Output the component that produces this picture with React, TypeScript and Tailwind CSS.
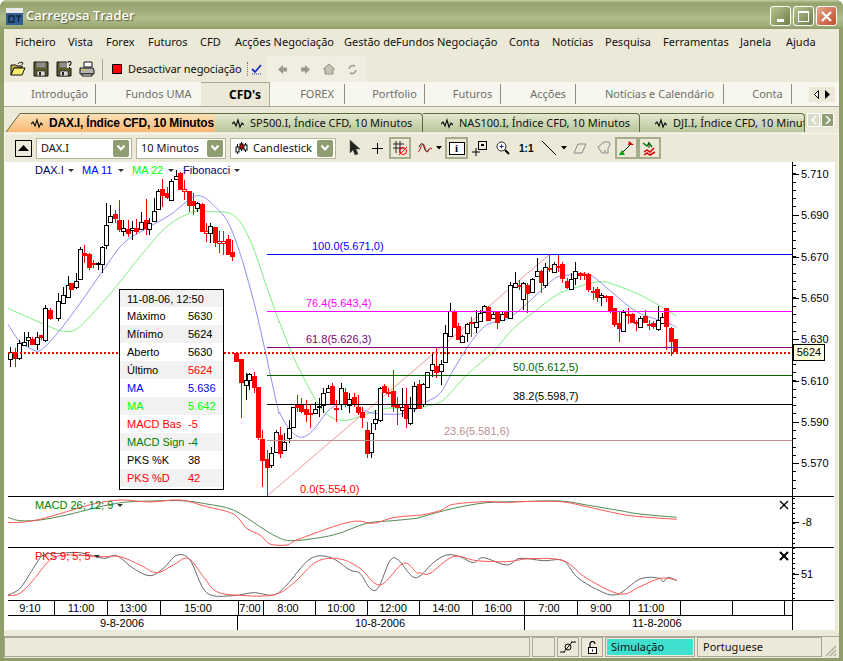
import React from 'react';

type Candle = [number, number, number, number, number, 'w' | 'r' | 'h'];

// candle coords are read off three crops, toPage maps them back to page pixels
const leftCandles: Candle[] = [
  [30, 575, 598, 562, 620, 'w'], [45, 575, 595, 565, 620, 'r'], [58, 550, 593, 540, 600, 'w'],
  [72, 545, 556, 517, 556, 'w'], [85, 532, 540, 517, 560, 'w'], [97, 538, 552, 530, 555, 'r'],
  [110, 532, 552, 517, 570, 'w'], [124, 526, 530, 526, 540, 'r'], [136, 445, 540, 436, 545, 'w'],
  [150, 450, 473, 445, 480, 'r'], [175, 424, 475, 400, 482, 'w'], [190, 406, 430, 380, 430, 'w'],
  [203, 376, 412, 348, 412, 'w'], [213, 370, 388, 368, 390, 'r'], [229, 364, 382, 340, 386, 'w'],
  [241, 268, 358, 262, 360, 'w'], [253, 280, 285, 255, 310, 'r'], [267, 283, 322, 280, 330, 'r'],
  [280, 309, 312, 300, 325, 'r'], [293, 309, 313, 305, 330, 'w'], [307, 262, 312, 258, 340, 'w'],
  [319, 196, 256, 130, 268, 'w'], [331, 169, 186, 135, 190, 'w'], [345, 163, 173, 150, 190, 'r'],
  [358, 181, 206, 120, 215, 'r'], [370, 203, 214, 180, 228, 'w'], [384, 208, 218, 180, 232, 'r'],
  [397, 204, 210, 182, 240, 'w'], [408, 203, 212, 178, 222, 'r'], [424, 186, 208, 155, 210, 'w'],
  [437, 180, 205, 116, 225, 'r'], [448, 188, 208, 175, 225, 'w'], [463, 152, 182, 115, 182, 'w'],
  [474, 94, 146, 88, 150, 'w'], [486, 88, 106, 58, 140, 'r'], [500, 98, 112, 80, 118, 'r'],
  [514, 64, 121, 58, 122, 'w'], [528, 47, 57, 30, 60, 'w'], [540, 40, 86, 35, 90, 'r'],
  [553, 88, 93, 60, 120, 'h'], [567, 94, 136, 92, 155, 'r'], [580, 122, 136, 100, 165, 'r'],
  [592, 128, 145, 125, 155, 'w'], [606, 132, 212, 130, 215, 'r'], [618, 212, 218, 190, 245, 'h'],
  [631, 197, 220, 188, 250, 'w'], [645, 202, 245, 200, 260, 'r'], [657, 243, 250, 212, 280, 'h'],
  [670, 243, 250, 212, 285, 'h'], [684, 238, 281, 225, 285, 'r'], [697, 277, 288, 240, 302, 'r'],
  [708, 578, 602, 575, 604, 'r'], [723, 598, 665, 598, 775, 'r'], [737, 660, 675, 640, 720, 'w'],
  [748, 643, 660, 640, 690, 'w'], [762, 648, 682, 635, 700, 'r'], [773, 680, 832, 680, 840, 'r'],
  [787, 838, 900, 810, 980, 'r'], [801, 897, 920, 870, 1005, 'r'], [814, 880, 916, 860, 925, 'w'],
  [827, 817, 875, 810, 880, 'w'],
];

const midCandles: Candle[] = [
  [0, 615, 670, 590, 683, 'r'], [13, 636, 660, 610, 660, 'w'], [26, 595, 625, 570, 640, 'w'],
  [39, 532, 590, 530, 590, 'w'], [50, 524, 530, 495, 545, 'r'], [62, 524, 542, 505, 550, 'r'],
  [77, 537, 552, 510, 575, 'r'], [90, 550, 553, 525, 595, 'r'], [106, 538, 550, 515, 550, 'w'],
  [118, 527, 530, 505, 560, 'w'], [130, 490, 525, 475, 550, 'w'], [143, 475, 485, 465, 480, 'w'],
  [156, 468, 522, 458, 525, 'r'], [168, 533, 535, 510, 575, 'r'], [184, 475, 522, 458, 540, 'w'],
  [195, 485, 522, 475, 530, 'r'], [208, 508, 525, 490, 550, 'w'], [222, 502, 518, 490, 530, 'r'],
  [233, 530, 546, 495, 555, 'r'], [245, 545, 560, 530, 595, 'r'], [261, 600, 668, 575, 683, 'r'],
  [274, 610, 665, 580, 683, 'w'], [286, 566, 578, 540, 600, 'w'], [300, 475, 570, 470, 575, 'w'],
  [312, 467, 487, 462, 490, 'r'], [325, 486, 488, 475, 500, 'r'], [338, 483, 528, 420, 545, 'r'],
  [352, 526, 532, 500, 585, 'r'], [365, 530, 540, 475, 560, 'w'], [378, 525, 563, 475, 595, 'r'],
  [391, 535, 578, 500, 585, 'w'], [403, 468, 535, 455, 545, 'w'], [417, 462, 535, 450, 535, 'r'],
  [430, 462, 522, 460, 530, 'w'], [442, 427, 470, 425, 475, 'w'], [457, 403, 420, 365, 440, 'w'],
  [469, 408, 425, 355, 445, 'r'], [484, 403, 422, 390, 465, 'w'], [496, 308, 395, 285, 400, 'w'],
  [509, 242, 317, 218, 320, 'w'], [521, 245, 292, 240, 295, 'r'], [534, 288, 327, 280, 330, 'r'],
  [547, 317, 335, 315, 340, 'w'], [562, 283, 308, 280, 335, 'w'], [574, 277, 279, 260, 320, 'r'],
  [587, 277, 290, 240, 310, 'w'], [601, 250, 272, 240, 275, 'w'], [613, 227, 245, 225, 248, 'w'],
  [625, 232, 270, 228, 270, 'r'], [640, 253, 265, 245, 268, 'w'], [652, 243, 275, 243, 297, 'r'],
  [665, 253, 270, 245, 272, 'w'], [678, 245, 260, 243, 265, 'r'], [690, 165, 265, 155, 265, 'w'],
  [704, 160, 172, 125, 175, 'w'], [717, 165, 168, 150, 180, 'r'], [730, 160, 208, 155, 240, 'w'],
  [742, 165, 188, 160, 250, 'r'], [757, 148, 185, 145, 190, 'w'], [770, 122, 138, 85, 140, 'w'],
  [783, 122, 155, 120, 190, 'r'], [796, 110, 165, 100, 175, 'w'], [808, 113, 116, 75, 125, 'r'],
  [821, 103, 127, 97, 128, 'w'], [834, 107, 112, 75, 125, 'r'],
];

const rightCandles: Candle[] = [
  [65, 103, 145, 97, 160, 'r'], [80, 153, 170, 145, 178, 'r'], [94, 148, 178, 130, 180, 'w'],
  [106, 122, 145, 97, 165, 'w'], [119, 130, 135, 125, 150, 'r'], [132, 133, 136, 125, 150, 'r'],
  [144, 133, 178, 128, 185, 'r'], [158, 182, 185, 170, 210, 'r'], [171, 178, 200, 172, 215, 'r'],
  [184, 196, 202, 190, 228, 'w'], [197, 197, 200, 195, 215, 'r'], [210, 198, 240, 198, 248, 'r'],
  [222, 235, 282, 235, 292, 'r'], [238, 278, 295, 245, 335, 'r'], [250, 247, 302, 240, 302, 'w'],
  [263, 252, 255, 235, 282, 'r'], [276, 253, 275, 250, 280, 'r'], [288, 275, 278, 270, 302, 'r'],
  [301, 265, 290, 258, 295, 'w'], [315, 258, 275, 240, 278, 'r'], [328, 282, 285, 270, 300, 'r'],
  [340, 278, 288, 272, 298, 'r'], [355, 270, 297, 228, 302, 'w'], [367, 260, 278, 250, 280, 'w'],
  [379, 235, 288, 235, 360, 'r'], [393, 295, 332, 290, 378, 'r'], [405, 328, 362, 328, 365, 'r'],
];

const toPage = (list: Candle[], ox: number, oy: number): Candle[] =>
  list.map(([x, a, b, c, d, k]) => [
    Math.round(ox + x / 3),
    Math.round(oy + a / 3),
    Math.round(oy + b / 3),
    Math.round(oy + c / 3),
    Math.round(oy + d / 3),
    k,
  ]);

const candles = [
  ...toPage(leftCandles, 0, 160),
  ...toPage(midCandles, 280, 230),
  ...toPage(rightCandles, 540, 230),
];

const pts = (list: number[][], ox: number, oy: number) => list.map(([x, y]) => [ox + x / 3, oy + y / 3]);

// catmull-rom through the sampled points so the indicator curves stay round
const smooth = (p: number[][]) => {
  let d = `M${p[0][0]} ${p[0][1]}`;
  for (let i = 0; i < p.length - 1; i++) {
    const a = p[Math.max(i - 1, 0)];
    const b = p[i];
    const c = p[i + 1];
    const e = p[Math.min(i + 2, p.length - 1)];
    d += `C${b[0] + (c[0] - a[0]) / 6} ${b[1] + (c[1] - a[1]) / 6} ${c[0] - (e[0] - b[0]) / 6} ${c[1] - (e[1] - b[1]) / 6} ${c[0]} ${c[1]}`;
  }
  return d;
};

const ma11 = smooth([
  ...pts([[24, 493], [60, 545], [105, 572], [130, 565], [180, 510], [240, 430], [310, 330], [370, 250], [440, 205], [510, 165], [560, 125], [597, 107], [640, 135], [695, 210], [760, 420], [830, 730]], 0, 160),
  ...pts([[0, 550], [30, 600], [65, 622], [100, 600], [130, 560], [160, 530], [210, 518], [270, 548], [380, 550], [430, 520], [480, 490], [520, 420], [570, 340], [620, 285], [690, 262], [780, 185]], 280, 230),
  ...pts([[50, 142], [100, 135], [150, 135], [220, 190], [290, 245], [380, 278], [410, 292]], 540, 230),
]);

const ma22 = smooth([
  ...pts([[24, 445], [80, 470], [130, 492], [180, 512], [220, 512], [260, 480], [340, 390], [420, 290], [500, 200], [580, 155], [630, 155], [700, 165], [750, 240], [800, 380], [835, 480]], 0, 160),
  ...pts([[0, 280], [40, 380], [80, 460], [120, 530], [160, 565], [205, 570], [260, 552], [320, 535], [400, 535], [440, 528], [490, 510], [560, 435], [640, 365], [700, 295], [770, 240]], 280, 230),
  ...pts([[50, 195], [100, 175], [180, 155], [240, 170], [320, 205], [410, 258]], 540, 230),
]);

const macdRed = smooth([
  ...pts([[24, 97], [60, 97], [120, 88], [200, 65], [280, 42], [360, 30], [450, 36], [540, 30], [620, 50], [700, 72], [740, 115], [780, 135], [810, 162], [860, 165], [890, 150], [1000, 110], [1070, 93], [1120, 100], [1180, 83], [1250, 76]], 0, 490),
  ...pts([[0, 76], [60, 62], [100, 43], [200, 35], [260, 38], [300, 35], [420, 35], [500, 50], [600, 72], [660, 80], [770, 88]], 420, 490),
]);
const macdGreen = smooth([
  ...pts([[24, 82], [60, 92], [120, 90], [200, 75], [280, 55], [340, 42], [400, 35], [540, 32], [620, 42], [700, 60], [780, 110], [830, 140], [880, 152], [1000, 135], [1100, 100], [1180, 92], [1250, 85]], 0, 490),
  ...pts([[0, 82], [100, 55], [200, 38], [300, 35], [420, 33], [500, 45], [600, 62], [660, 72], [770, 82]], 420, 490),
]);
const pksBlack = smooth([
  ...pts([[24, 315], [60, 295], [100, 235], [130, 195], [180, 190], [240, 188], [310, 205], [350, 197], [400, 235], [450, 257], [490, 235], [530, 196], [570, 210], [620, 308], [700, 317], [760, 308], [820, 315], [860, 285], [930, 207], [990, 202], [1050, 240], [1080, 250], [1110, 295], [1135, 293], [1170, 212], [1195, 210], [1235, 258]], 0, 490),
  ...pts([[0, 258], [40, 218], [80, 195], [120, 200], [160, 218], [190, 203], [260, 225], [300, 205], [370, 212], [430, 212], [470, 260], [530, 298], [590, 314], [660, 267], [715, 264], [730, 275], [745, 262], [770, 272]], 420, 490),
]);
const pksRed = smooth([
  ...pts([[24, 317], [60, 310], [100, 270], [150, 210], [200, 195], [300, 200], [360, 200], [420, 225], [470, 248], [520, 225], [565, 205], [610, 260], [650, 305], [720, 316], [820, 315], [880, 280], [950, 215], [1020, 207], [1080, 235], [1140, 285], [1210, 220], [1250, 248]], 0, 490),
  ...pts([[0, 248], [30, 250], [100, 200], [170, 212], [260, 215], [330, 206], [430, 212], [500, 265], [600, 312], [660, 290], [720, 265], [770, 270]], 420, 490),
]);

const fibLines = [
  { y: 254.5, color: '#0000ff', label: '100.0(5.671,0)', x: 312, ly: 250 },
  { y: 311.5, color: '#ff00ff', label: '76.4(5.643,4)', x: 306, ly: 307 },
  { y: 347.5, color: '#800080', label: '61.8(5.626,3)', x: 306, ly: 343 },
  { y: 375.5, color: '#006400', label: '50.0(5.612,5)', x: 513, ly: 371 },
  { y: 404.5, color: '#000000', label: '38.2(5.598,7)', x: 513, ly: 400 },
  { y: 440.5, color: '#bc8f8f', label: '23.6(5.581,6)', x: 444, ly: 435 },
];

const priceLabels = [
  ['5.710', 178], ['5.690', 219], ['5.670', 261], ['5.650', 302],
  ['5.630', 343], ['5.610', 385], ['5.590', 426], ['5.570', 467],
] as const;

const topTicks = [54, 107, 160, 238, 263, 315, 367, 419, 472, 524, 577, 629, 680, 732, 784];
const timeLabels = [
  ['9:10', 30], ['11:00', 81], ['13:00', 133], ['15:00', 198], ['7:00', 250], ['8:00', 288],
  ['10:00', 341], ['12:00', 393], ['14:00', 446], ['16:00', 498], ['7:00', 549], ['9:00', 601], ['11:00', 651],
] as const;

const axisTicks = (from: number, to: number, step: number) => {
  const out: number[] = [];
  for (let y = from; y < to; y += step) out.push(Math.round(y) + 0.5);
  return out;
};

const ChartSvg = () => (
  <svg width="830" height="468" viewBox="5 162 830 468" className="block" fontFamily="'Liberation Sans', Arial, sans-serif" fontSize="11">
    {/* ma lines sit under the candles */}
    <path d={ma22} fill="none" stroke="#7dee7d" strokeWidth="1" />
    <path d={ma11} fill="none" stroke="#8f8ff2" strokeWidth="1" />
    <line x1="267" y1="496" x2="550" y2="254" stroke="#f59a9a" strokeWidth="1" />

    {candles.map(([x, a, b, c, d, k], i) => {
      const color = k === 'w' ? '#000000' : '#ff0000';
      return (
        <g key={i} shapeRendering="crispEdges">
          <line x1={x + 0.5} x2={x + 0.5} y1={c} y2={d} stroke={color} strokeWidth="1" />
          {k === 'r' ? (
            <rect x={x - 2} y={a} width="5" height={Math.max(b - a, 1) + 1} fill="#ff0000" />
          ) : (
            <rect x={x - 1.5} y={a + 0.5} width="4" height={Math.max(b - a, 1)} fill="#ffffff" stroke={color} strokeWidth="1" />
          )}
        </g>
      );
    })}

    <g shapeRendering="crispEdges">
      {fibLines.map(f => (
        <line key={f.label} x1="267" x2="792" y1={f.y} y2={f.y} stroke={f.color} strokeWidth="1" />
      ))}
      <line x1="8" x2="792" y1="352.5" y2="352.5" stroke="#ff0000" strokeWidth="2" strokeDasharray="2 2" />
      <line x1="267.5" x2="267.5" y1="486" y2="496" stroke="#ff0000" strokeWidth="1" />
      <line x1="8" x2="834" y1="496.5" y2="496.5" stroke="#000" strokeWidth="1" />
      <line x1="8" x2="834" y1="547.5" y2="547.5" stroke="#000" strokeWidth="1" />
      <line x1="8" x2="834" y1="600.5" y2="600.5" stroke="#000" strokeWidth="1" />
      <line x1="8" x2="792" y1="615.5" y2="615.5" stroke="#000" strokeWidth="1" />
      <line x1="792.5" x2="792.5" y1="162" y2="630" stroke="#000" strokeWidth="1" />
      {axisTicks(165, 496, 8.28).map(y => (
        <line key={y} x1="793" x2="796" y1={y} y2={y} stroke="#000" strokeWidth="1" />
      ))}
      {[174, 215, 257, 298, 339, 381, 422, 463].map(y => (
        <line key={y} x1="793" x2="799" y1={y + 0.5} y2={y + 0.5} stroke="#000" strokeWidth="1" />
      ))}
      {axisTicks(498, 600, 5).map(y => (
        <line key={y} x1="793" x2="795" y1={y} y2={y} stroke="#000" strokeWidth="1" />
      ))}
      <line x1="793" x2="799" y1="522.5" y2="522.5" stroke="#000" strokeWidth="1" />
      <line x1="793" x2="799" y1="574.5" y2="574.5" stroke="#000" strokeWidth="1" />
      {topTicks.map(x => (
        <line key={x} x1={x + 0.5} x2={x + 0.5} y1="600" y2="615" stroke="#000" strokeWidth="1" />
      ))}
      <line x1="237.5" x2="237.5" y1="615" y2="630" stroke="#000" strokeWidth="1" />
      <line x1="524.5" x2="524.5" y1="615" y2="630" stroke="#000" strokeWidth="1" />
    </g>

    {fibLines.map(f => (
      <text key={f.label} x={f.x} y={f.ly} fill={f.color}>{f.label}</text>
    ))}
    <text x="300" y="493" fill="#ff0000">0.0(5.554,0)</text>

    <text x="35" y="174" fill="#000060">DAX.I</text>
    <path d="M68 169h6l-3 3z" fill="#333" />
    <text x="82" y="174" fill="#0000ff">MA 11</text>
    <path d="M118 169h6l-3 3z" fill="#333" />
    <text x="132" y="174" fill="#00ff00">MA 22</text>
    <path d="M168 169h6l-3 3z" fill="#333" />
    <text x="183" y="174" fill="#000060">Fibonacci</text>
    <path d="M234 169h6l-3 3z" fill="#333" />

    {priceLabels.map(([t, y]) => (
      <text key={t} x="801" y={y} fill="#000">{t}</text>
    ))}
    <text x="802" y="526" fill="#000">-8</text>
    <text x="801" y="578" fill="#000">51</text>

    <path d={macdGreen} fill="none" stroke="#4f8a4f" strokeWidth="1" />
    <path d={macdRed} fill="none" stroke="#f55" strokeWidth="1" />
    <path d={pksBlack} fill="none" stroke="#666" strokeWidth="1" />
    <path d={pksRed} fill="none" stroke="#f55" strokeWidth="1" />
    <text x="35" y="509" fill="#008000">MACD 26; 12; 9</text>
    <path d="M117 504h6l-3 3z" fill="#333" />
    <text x="35" y="560" fill="#ff0000">PKS 9; 5; 5</text>
    <path d="M94 555h6l-3 3z" fill="#333" />
    <path d="M780 501l8 8M788 501l-8 8" stroke="#000" strokeWidth="1.4" />
    <path d="M780 552l8 8M788 552l-8 8" stroke="#000" strokeWidth="2" />

    {timeLabels.map(([t, x], i) => (
      <text key={i} x={x} y="612" textAnchor="middle" fill="#000">{t}</text>
    ))}
    <text x="122" y="627" textAnchor="middle" fill="#000">9-8-2006</text>
    <text x="380" y="627" textAnchor="middle" fill="#000">10-8-2006</text>
    <text x="657" y="627" textAnchor="middle" fill="#000">11-8-2006</text>
  </svg>
);

const rows = [
  ['Máximo', '5630', 'text-[#000]', 'text-[#000]'],
  ['Mínimo', '5624', 'text-[#000]', 'text-[#000]'],
  ['Aberto', '5630', 'text-[#000]', 'text-[#000]'],
  ['Último', '5624', 'text-[#000]', 'text-[#ff0000]'],
  ['MA', '5.636', 'text-[#0000ff]', 'text-[#0000ff]'],
  ['MA', '5.642', 'text-[#00ff00]', 'text-[#00ff00]'],
  ['MACD Bas', '-5', 'text-[#ff0000]', 'text-[#ff0000]'],
  ['MACD Sign', '-4', 'text-[#008000]', 'text-[#008000]'],
  ['PKS %K', '38', 'text-[#000]', 'text-[#000]'],
  ['PKS %D', '42', 'text-[#ff0000]', 'text-[#ff0000]'],
];

const InfoBox = () => (
  <div className="absolute left-[114px] top-[127px] w-[105px] h-[201px] border border-black bg-white font-['Liberation_Sans',Arial,sans-serif] text-[11px] leading-[18px]">
    <div className="h-[17px] bg-[#f2f2f2] pl-[7px] text-[#000]">11-08-06, 12:50</div>
    {rows.map((r, i) => (
      <div key={i} className={`flex h-[18px] pl-[7px] ${i % 2 === 1 ? 'bg-[#f2f2f2]' : 'bg-white'}`}>
        <span className={`w-[61px] shrink-0 ${r[2]}`}>{r[0]}</span>
        <span className={r[3]}>{r[1]}</span>
      </div>
    ))}
  </div>
);

const menu: [string, number][] = [
  ['Ficheiro', 53], ['Vista', 38], ['Forex', 42], ['Futuros', 52], ['CFD', 35], ['Acções Negociação', 109],
  ['Gestão deFundos Negociação', 165], ['Conta', 43], ['Notícias', 53], ['Pesquisa', 58], ['Ferramentas', 77], ['Janela', 46], ['Ajuda', 40],
];

const mainTabs: [string, number, boolean][] = [
  ['Introdução', 92, true], ['Fundos UMA', 105, false], ["CFD's", 69, false], ['FOREX', 75, true],
  ['Portfolio', 80, true], ['Futuros', 76, true], ['Acções', 75, true], ['Notícias e Calendário', 148, true], ['Conta', 68, true],
];

const WaveIcon = () => (
  <svg width="12" height="12" viewBox="0 0 12 12" className="shrink-0">
    <path d="M0 7l2-2 2 4 2-6 2 7 2-4 2 2" fill="none" stroke="#111" strokeWidth="1.2" />
  </svg>
);

const DocTab = ({ label, width, pad }: { label: string; width: number; pad: number }) => (
  <div
    className="flex h-[19px] items-center gap-[6px] overflow-hidden rounded-tr-[4px] border-r border-t border-[#5d6b3e] bg-[linear-gradient(to_bottom,#e3e8cf,#b9c79b)] text-[11px] text-[#111]"
    style={{ width, paddingLeft: pad }}
  >
    <WaveIcon />
    <span className="whitespace-nowrap">{label}</span>
  </div>
);

const Combo = ({ width, label, icon }: { width: number; label: string; icon?: boolean }) => (
  <div className="flex h-[21px] items-center border border-[#b5b99a] bg-white pl-[4px] pr-[2px]" style={{ width }}>
    {icon && (
      <svg width="13" height="13" viewBox="0 0 13 13" className="mr-[5px] shrink-0">
        <path d="M2.5 2v10M6.5 0v9M10.5 1v9" stroke="#000" />
        <rect x="1" y="5" width="3" height="5" fill="#fff" stroke="#000" />
        <rect x="5" y="2" width="3" height="5" fill="#ff0000" stroke="#000" />
        <rect x="9" y="3" width="3" height="5" fill="#fff" stroke="#000" />
      </svg>
    )}
    <span className="flex-1 whitespace-nowrap text-[11px] text-[#111]">{label}</span>
    <div className="flex h-[17px] w-[16px] items-center justify-center rounded-[2px] bg-[#8f9e70]">
      <svg width="10" height="8" viewBox="0 0 10 8">
        <path d="M1.5 1.5L5 5.5l3.5-4" fill="none" stroke="#fff" strokeWidth="2" />
      </svg>
    </div>
  </div>
);

const Floppy = ({ help }: { help?: boolean }) => (
  <svg width="16" height="16" viewBox="0 0 16 16">
    <path d="M1 1h14v14H1z" fill="#5c5c2e" stroke="#111" />
    <rect x="3.5" y="1.5" width="9" height="5" fill="#8c8c8c" />
    <rect x="4" y="10" width="8" height="5" fill="#ddd" stroke="#111" strokeWidth="0.6" />
    <rect x="6" y="11" width="2" height="3.5" fill="#222" />
    {help && <rect x="11" y="0" width="5" height="7" fill="#ece9d8" />}
    {help && <path d="M12 2c0-2 3-2 3 0s-1.500 1.500-1.500 3M13.500 6v1.500" fill="none" stroke="#111" strokeWidth="1.2" />}
  </svg>
);

const ToolToggle = ({ children, w = 22 }: { children: React.ReactNode; w?: number }) => (
  <div className="flex h-[22px] items-center justify-center border-2 border-[#a5ad8a] bg-[#ece9d8]" style={{ width: w }}>
    {children}
  </div>
);

const Caret = () => (
  <svg width="6" height="4" viewBox="0 0 6 4" className="shrink-0">
    <path d="M0 0h6L3 3.500z" fill="#000" />
  </svg>
);

const StatusCell = ({ w, children, cls = '' }: { w: number; children?: React.ReactNode; cls?: string }) => (
  <div className={`flex h-[20px] items-center border border-[#aca899] ${cls}`} style={{ width: w }}>
    {children}
  </div>
);

export default function App() {
  return (
    <div className="flex h-[661px] w-[843px] flex-col overflow-hidden rounded-t-[7px] bg-[#8f9e6b] font-['Noto_Sans',Tahoma,sans-serif]">
      {/* title bar */}
      <div className="flex h-[29px] shrink-0 items-center bg-[linear-gradient(to_bottom,#c4cfa4_0px,#94a26c_3px,#a3b07e_12px,#b2bd8d_18px,#9dab76_26px,#8d9b66_29px)] pl-[6px] pr-[6px] pt-[3px]">
        <svg width="17" height="17" viewBox="0 0 17 17" className="mr-[3px] shrink-0">
          <rect width="17" height="5" fill="#e8e8e8" />
          <rect y="5" width="17" height="12" fill="#2f5f93" />
          <path d="M3 8h5v6H3zM10 8h5M12.500 8v6" fill="none" stroke="#10243c" strokeWidth="1.400" />
        </svg>
        <span className="font-['Open_Sans',sans-serif] text-[13px] font-semibold text-white [text-shadow:1px_1px_1px_#55603c]">Carregosa Trader</span>
        <div className="ml-auto flex gap-[2px]">
          <div className="flex h-[20px] w-[21px] items-end justify-center rounded-[3px] border border-white bg-[linear-gradient(135deg,#b9c490,#6e7e4a)] pb-[3px]">
            <div className="h-[3px] w-[7px] bg-white" />
          </div>
          <div className="flex h-[20px] w-[21px] items-center justify-center rounded-[3px] border border-white bg-[linear-gradient(135deg,#b9c490,#6e7e4a)]">
            <div className="h-[11px] w-[11px] border border-t-2 border-white" />
          </div>
          <div className="flex h-[20px] w-[21px] items-center justify-center rounded-[3px] border border-white bg-[linear-gradient(135deg,#e9a58a,#c0492a)]">
            <svg width="13" height="13" viewBox="0 0 13 13">
              <path d="M2 2l9 9M11 2l-9 9" stroke="#fff" strokeWidth="2.200" />
            </svg>
          </div>
        </div>
      </div>

      <div className="mx-[4px] flex min-h-0 flex-1 flex-col bg-[#ece9d8]">
        {/* menu */}
        <div className="flex h-[27px] shrink-0 items-center pl-[11px] text-[11px] text-[#111]">
          {menu.map(([m, w]) => (
            <span key={m} className="whitespace-nowrap" style={{ width: w }}>{m}</span>
          ))}
        </div>

        {/* main toolbar */}
        <div className="flex h-[26px] shrink-0 items-center pl-[6px] text-[11px] text-[#111]">
          <div className="flex items-center gap-[7px]">
            <svg width="16" height="16" viewBox="0 0 16 16">
              <path d="M1 4h5l1 1h5v2H4L1 14z" fill="#c9b53a" stroke="#111" />
              <path d="M4 7h11l-3 7H1z" fill="#f7ee6b" stroke="#111" />
              <path d="M8 3c1-2 3-2 5-1m0 0l-2-1m2 1l-1 2" fill="none" stroke="#333" />
            </svg>
            <Floppy />
            <Floppy help />
            <svg width="16" height="16" viewBox="0 0 16 16">
              <path d="M5 1h8v5H5z" fill="#fff" stroke="#111" />
              <path d="M1 7h13l1 2v4H1z" fill="#b5b5b5" stroke="#111" />
              <path d="M3 9h4" stroke="#d8c23a" strokeWidth="1.500" />
              <path d="M3 13h10v2H3z" fill="#fff" stroke="#111" />
            </svg>
          </div>
          <div className="ml-[7px] h-[21px] w-px bg-[#aca899]" />
          <div className="ml-[9px] h-[10px] w-[10px] border border-black bg-[#ff0000]" />
          <span className="ml-[6px] whitespace-nowrap tracking-[-0.1px]">Desactivar negociação</span>
          <div className="ml-[5px] h-[14px] border-l border-dotted border-[#777]" />
          <svg width="12" height="12" viewBox="0 0 12 12" className="ml-[3px]">
            <path d="M1 6l3 3 6-7" fill="none" stroke="#1a2fc0" strokeWidth="1.800" />
            <path d="M1 11h10" stroke="#1a2fc0" strokeDasharray="1 1" />
          </svg>
          <div className="ml-[4px] flex h-[26px] w-[100px] items-center gap-[12px] bg-[#f0eee1] pl-[10px]">
            <svg width="11" height="11" viewBox="0 0 11 11"><path d="M6 1L1 5.500 6 10V7.500h4v-4H6z" fill="#9a9a8c" /></svg>
            <svg width="11" height="11" viewBox="0 0 11 11"><path d="M5 1l5 4.500L5 10V7.500H1v-4h4z" fill="#9a9a8c" /></svg>
            <svg width="12" height="12" viewBox="0 0 12 12"><path d="M6 1L0.500 6H2v5h8V6h1.500z" fill="#c4c2b2" stroke="#8e8e80" /></svg>
            <svg width="11" height="11" viewBox="0 0 11 11"><path d="M2 5a4 4 0 016-3M9 6a4 4 0 01-6 3" fill="none" stroke="#9a9a8c" strokeWidth="1.500" /></svg>
          </div>
        </div>

        {/* main tabs */}
        <div className="flex h-[25px] shrink-0 items-stretch border-b border-[#aca899] bg-[#f7f6ef] text-[11px] text-[#6f6f6a]">
          {mainTabs.map(([t, w, sep]) => (
            <div key={t} className="flex items-center" style={{ width: w }}>
              {t === "CFD's" ? (
                <div className="flex h-full w-full items-center justify-center border-r border-t border-[#aca899] bg-[#ece9d8] pl-[20px] text-[12px] font-bold text-black">{t}</div>
              ) : (
                <>
                  <span className="flex-1 whitespace-nowrap pl-[20px] text-center">{t}</span>
                  {sep && <div className="h-[20px] w-px bg-[#8e8e80]" />}
                </>
              )}
            </div>
          ))}
          <div className="ml-[17px] flex h-[15px] w-[26px] items-center justify-center gap-[6px] self-center bg-[#ece9d8]">
            <svg width="5" height="9" viewBox="0 0 5 9"><path d="M4.500 0.500L0.500 4.500l4 4z" fill="#fff" stroke="#000" /></svg>
            <svg width="5" height="9" viewBox="0 0 5 9"><path d="M0 0l5 4.500L0 9z" fill="#000" /></svg>
          </div>
        </div>

        {/* document tabs */}
        <div className="flex h-[26px] shrink-0 items-end pb-[1px] pl-[2px]">
          <div className="relative h-[19px] w-[209px]">
            <div className="flex h-full w-full items-center gap-[6px] overflow-hidden rounded-tr-[4px] bg-[linear-gradient(to_bottom,#fde3bd,#f9b872)] pl-[25px] font-['Liberation_Sans',sans-serif] text-[12px] font-bold text-black [clip-path:polygon(14px_0,100%_0,100%_100%,0_100%)]">
              <WaveIcon />
              <span className="whitespace-nowrap tracking-[-0.2px]">DAX.I, Índice CFD, 10 Minutos</span>
            </div>
            <svg width="209" height="19" viewBox="0 0 209 19" className="absolute left-0 top-0">
              <path d="M0 19L14 0.500H209" fill="none" stroke="#5d6b3e" />
            </svg>
          </div>
          <DocTab label="SP500.I, Índice CFD, 10 Minutos" width={208} pad={17} />
          <DocTab label="NAS100.I, Índice CFD, 10 Minutos" width={217} pad={18} />
          <DocTab label="DJI.I, Índice CFD, 10 Minutos" width={165} pad={15} />
          <div className="mb-[5px] flex h-[14px] w-[29px] items-center gap-[1px] bg-[#dfe2c8] pl-[2px]">
            <div className="flex h-[14px] w-[13px] items-center justify-center border border-white bg-[#dbdcc9]">
              <svg width="6" height="8" viewBox="0 0 6 8"><path d="M5 0L1 4l4 4" fill="none" stroke="#fff" strokeWidth="1.500" /></svg>
            </div>
            <div className="flex h-[14px] w-[13px] items-center justify-center border border-white bg-[#8f9e70]">
              <svg width="6" height="8" viewBox="0 0 6 8"><path d="M1 0l4 4-4 4" fill="none" stroke="#fff" strokeWidth="1.500" /></svg>
            </div>
          </div>
        </div>

        {/* chart panel */}
        <div className="flex min-h-0 flex-1 flex-col border-x border-t border-[#f7f6ef]">
          <div className="flex h-[28px] shrink-0 items-center pl-[10px]">
            <div className="flex h-[17px] w-[17px] items-center justify-center border border-black bg-[#ece9d8]">
              <svg width="11" height="6" viewBox="0 0 11 6"><path d="M5.500 0L11 6H0z" fill="#000" /></svg>
            </div>
            <div className="ml-[4px] flex items-center gap-[4px]">
              <Combo width={96} label="DAX.I" />
              <Combo width={90} label="10 Minutos" />
              <Combo width={106} label="Candlestick" icon />
            </div>
            <svg width="12" height="16" viewBox="0 0 12 16" className="ml-[13px]">
              <path d="M1 0v13l3-3 2 5 3-1-2-5h4z" fill="#222" stroke="#555" strokeWidth="0.500" />
            </svg>
            <svg width="11" height="11" viewBox="0 0 11 11" className="ml-[11px]"><path d="M5.500 0v11M0 5.500h11" stroke="#000" /></svg>
            <div className="ml-[6px]">
              <ToolToggle>
                <svg width="15" height="15" viewBox="0 0 15 15">
                  <path d="M3 0v12M7 0v12M0 3h11M0 7h11" stroke="#222" />
                  <circle cx="10" cy="10" r="3.500" fill="none" stroke="#ff0000" />
                  <path d="M6 14l8-8" stroke="#ff0000" />
                </svg>
              </ToolToggle>
            </div>
            <svg width="15" height="12" viewBox="0 0 15 12" className="ml-[7px]">
              <path d="M0 10c2 0 3-8 5-8s2 8 4 8 2-6 5-3" fill="none" stroke="#cc0000" />
              <path d="M1 5c2-5 4-4 5 0s3 6 5 2" fill="none" stroke="#222" />
            </svg>
            <div className="ml-[3px]"><Caret /></div>
            <div className="ml-[3px]">
              <ToolToggle w={23}>
                <div className="flex h-[13px] w-[16px] items-center justify-center border border-black bg-white font-['Liberation_Serif',serif] text-[11px] font-bold leading-none text-black">i</div>
              </ToolToggle>
            </div>
            <svg width="15" height="15" viewBox="0 0 15 15" className="ml-[4px]">
              <path d="M4 7v8M0 11h8" stroke="#000" />
              <rect x="6.500" y="0.500" width="8" height="8" fill="#ece9d8" stroke="#000" />
              <rect x="9" y="3" width="3" height="2" fill="#000" />
            </svg>
            <svg width="14" height="14" viewBox="0 0 14 14" className="ml-[9px]">
              <circle cx="5.500" cy="5.500" r="4.500" fill="#fff" stroke="#222" />
              <path d="M3.500 5.500h4M5.500 3.500v4" stroke="#1a2fc0" />
              <path d="M9 9l4 4" stroke="#000" strokeWidth="2" />
            </svg>
            <span className="ml-[9px] w-[14px] font-['Liberation_Sans',sans-serif] text-[10px] font-bold text-black">1:1</span>
            <svg width="14" height="14" viewBox="0 0 14 14" className="ml-[9px]"><path d="M0 0l14 14" stroke="#000" /></svg>
            <div className="ml-[5px]"><Caret /></div>
            <svg width="14" height="11" viewBox="0 0 14 11" className="ml-[6px]">
              <path d="M1 10l4-9h8L9 10z" fill="#ece9d8" stroke="#888" />
            </svg>
            <svg width="14" height="14" viewBox="0 0 14 14" className="ml-[10px]">
              <path d="M1 6l6-5h5l1 3-2 3v5H5z" fill="#ece9d8" stroke="#888" />
              <path d="M8 9v2" stroke="#777" />
            </svg>
            <div className="ml-[4px] flex">
              <ToolToggle w={23}>
                <svg width="15" height="15" viewBox="0 0 15 15">
                  <path d="M3 12L12 3" stroke="#222" />
                  <path d="M10 0l5 4h-6z" fill="#dd0000" />
                  <path d="M0 14l3-5 3 5z" fill="#00a000" />
                </svg>
              </ToolToggle>
              <ToolToggle w={23}>
                <svg width="15" height="15" viewBox="0 0 15 15">
                  <path d="M1 2l4 3 2-3 3 4" fill="none" stroke="#008000" strokeWidth="1.500" />
                  <path d="M2 11l3-2 3 2 4-4M2 14l3-2 3 2 5-3" fill="none" stroke="#dd0000" strokeWidth="1.500" />
                  <path d="M7 1v6" stroke="#333" />
                </svg>
              </ToolToggle>
            </div>
          </div>
          <div className="relative h-[468px] w-[830px] shrink-0 overflow-hidden bg-white">
            <ChartSvg />
            <InfoBox />
            {/* last price flag */}
            <div className="absolute left-[788px] top-[182px] flex h-[17px] w-[32px] items-center justify-center border border-black bg-[#ffffe1] font-['Liberation_Sans',sans-serif] text-[11px] text-black">5624</div>
          </div>
        </div>

        {/* status bar */}
        <div className="mt-[6px] flex h-[22px] shrink-0 items-start gap-[2px] border-t border-[#aca899] text-[11px] text-[#111]">
          <StatusCell w={526} />
          <StatusCell w={23} />
          <StatusCell w={22} cls="justify-center">
            <svg width="16" height="12" viewBox="0 0 16 12">
              <path d="M0 11h5M11 1h5" stroke="#000" />
              <circle cx="8" cy="6" r="3" fill="none" stroke="#000" />
              <path d="M4 11l8-10" stroke="#000" />
            </svg>
          </StatusCell>
          <StatusCell w={22} cls="justify-center">
            <svg width="11" height="13" viewBox="0 0 11 13">
              <path d="M3 6V3a2.500 2.500 0 015 0" fill="none" stroke="#000" strokeWidth="1.200" />
              <rect x="1.500" y="6.500" width="8" height="6" fill="#fff" stroke="#000" />
              <path d="M5.500 8.500v2" stroke="#000" />
            </svg>
          </StatusCell>
          <StatusCell w={90} cls="p-[1px]">
            <div className="flex h-full w-full items-center bg-[#40e0d0] pl-[4px]">Simulação</div>
          </StatusCell>
          <StatusCell w={125} cls="pl-[5px]">Portuguese</StatusCell>
          <svg width="12" height="12" viewBox="0 0 12 12" className="ml-[1px] mt-[8px]">
            <path d="M11 1L1 11M11 5l-6 6M11 9l-2 2" stroke="#aca899" strokeWidth="1.200" />
          </svg>
        </div>
      </div>
      <div className="h-[3px] shrink-0" />
    </div>
  );
}
